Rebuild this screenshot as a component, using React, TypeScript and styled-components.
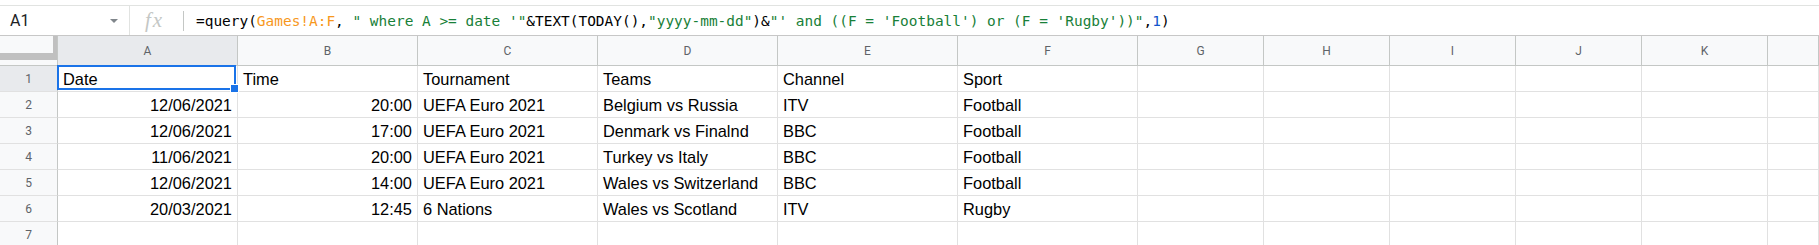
import React from 'react';
import styled, { createGlobalStyle } from 'styled-components';

const GlobalStyle = createGlobalStyle`
  html, body {
    margin: 0;
    padding: 0;
    background: #fff;
    overflow: hidden;
  }
  * {
    box-sizing: border-box;
  }
`;

const Page = styled.div`
  width: 1819px;
  height: 245px;
  padding-top: 5px;
  background: #fff;
  overflow: hidden;
  font-family: Roboto, "Liberation Sans", Arial, sans-serif;
`;

const FormulaBar = styled.div`
  display: flex;
  align-items: center;
  height: 31px;
  border-top: 1px solid #e1e3e1;
  border-bottom: 1px solid #c7c7c7;
`;

const NameBox = styled.div`
  display: flex;
  align-items: center;
  justify-content: space-between;
  width: 130px;
  height: 100%;
  padding: 0 11px 0 10px;
  border-right: 1px solid #e1e3e1;
  font-size: 16px;
  color: #202124;
`;

const Caret = styled.span`
  width: 0;
  height: 0;
  border-left: 4px solid transparent;
  border-right: 4px solid transparent;
  border-top: 4px solid #80868b;
`;

const FxArea = styled.div`
  display: flex;
  align-items: center;
  width: 53px;
  height: 100%;
  padding-left: 15px;
`;

const FxGlyph = styled.span`
  font-family: "Liberation Serif", "DejaVu Serif", serif;
  font-style: italic;
  font-size: 21px;
  letter-spacing: 2px;
  color: #c4c7c5;
`;

const Divider = styled.span`
  width: 1px;
  height: 20px;
  background: #c4c7c5;
`;

const FormulaText = styled.div`
  margin-left: 12px;
  font-family: "DejaVu Sans Mono", "Liberation Mono", monospace;
  font-size: 14.45px;
  white-space: pre;
  color: #000;
`;

const Token = styled.span<{ $kind?: 'range' | 'string' | 'number' }>`
  color: ${p =>
    p.$kind === 'range' ? '#f7981d' : p.$kind === 'string' ? '#188038' : p.$kind === 'number' ? '#1155cc' : '#000'};
`;

const Grid = styled.div`
  display: grid;
  grid-template-columns: 58px repeat(6, 180px) repeat(5, 126px) 1fr;
  grid-template-rows: 30px;
  grid-auto-rows: 26px;
`;

const Corner = styled.div`
  border-right: 1px solid #c4c7c5;
  border-bottom: 1px solid #c4c7c5;
  background:
    linear-gradient(#c0c0c0, #c0c0c0) right top / 4px 24px no-repeat,
    linear-gradient(#c0c0c0, #c0c0c0) left 17px / 100% 7px no-repeat,
    #f8f9fa;
`;

const ColHeader = styled.div<{ $active?: boolean }>`
  display: flex;
  align-items: center;
  justify-content: center;
  border-right: 1px solid #c4c7c5;
  border-bottom: 1px solid #c4c7c5;
  background: ${p => (p.$active ? '#e8eaed' : '#f8f9fa')};
  font-size: 12px;
  color: #5f6368;
`;

const RowHeader = styled.div<{ $active?: boolean }>`
  display: flex;
  align-items: center;
  justify-content: center;
  border-right: 1px solid #c4c7c5;
  border-bottom: 1px solid #e1e1e1;
  background: ${p => (p.$active ? '#e8eaed' : '#f8f9fa')};
  font-size: 12px;
  color: #5f6368;
`;

const Cell = styled.div<{ $align?: 'left' | 'right' }>`
  position: relative;
  display: flex;
  align-items: flex-end;
  justify-content: ${p => (p.$align === 'right' ? 'flex-end' : 'flex-start')};
  padding: 0 5px 2px 5px;
  border-right: 1px solid #e1e1e1;
  border-bottom: 1px solid #e1e1e1;
  font-family: "Liberation Sans", Arial, sans-serif;
  font-size: 16.4px;
  color: #000;
  white-space: nowrap;
  overflow: visible;
`;

const Selection = styled.div`
  position: absolute;
  top: -1px;
  left: -1px;
  right: 1px;
  bottom: 1px;
  border: 2px solid #1a73e8;
  z-index: 2;
  pointer-events: none;
`;

const FillHandle = styled.div`
  position: absolute;
  right: -5px;
  bottom: -5px;
  width: 9px;
  height: 9px;
  border: 1px solid #fff;
  background: #1a73e8;
`;

const columns = ['A', 'B', 'C', 'D', 'E', 'F', 'G', 'H', 'I', 'J', 'K', ''];

type Row = string[];

const rows: Row[] = [
  ['Date', 'Time', 'Tournament', 'Teams', 'Channel', 'Sport'],
  ['12/06/2021', '20:00', 'UEFA Euro 2021', 'Belgium vs Russia', 'ITV', 'Football'],
  ['12/06/2021', '17:00', 'UEFA Euro 2021', 'Denmark vs Finalnd', 'BBC', 'Football'],
  ['11/06/2021', '20:00', 'UEFA Euro 2021', 'Turkey vs Italy', 'BBC', 'Football'],
  ['12/06/2021', '14:00', 'UEFA Euro 2021', 'Wales vs Switzerland', 'BBC', 'Football'],
  ['20/03/2021', '12:45', '6 Nations', 'Wales vs Scotland', 'ITV', 'Rugby'],
  [],
];

const App: React.FC = () => {
  return (
    <Page>
      <GlobalStyle />
      <FormulaBar>
        <NameBox>
          <span>A1</span>
          <Caret />
        </NameBox>
        <FxArea>
          <FxGlyph>fx</FxGlyph>
        </FxArea>
        <Divider />
        <FormulaText>
          <Token>=query(</Token>
          <Token $kind="range">Games!A:F</Token>
          <Token>, </Token>
          <Token $kind="string">" where A &gt;= date '"</Token>
          <Token>&amp;TEXT(TODAY(),</Token>
          <Token $kind="string">"yyyy-mm-dd"</Token>
          <Token>)&amp;</Token>
          <Token $kind="string">"' and ((F = 'Football') or (F = 'Rugby'))"</Token>
          <Token>,</Token>
          <Token $kind="number">1</Token>
          <Token>)</Token>
        </FormulaText>
      </FormulaBar>

      <Grid>
        <Corner />
        {columns.map((c, i) => (
          <ColHeader key={i} $active={c === 'A'}>
            {c}
          </ColHeader>
        ))}
        {rows.map((row, r) => (
          <React.Fragment key={r}>
            <RowHeader $active={r === 0}>{r + 1}</RowHeader>
            {columns.map((_, c) => {
              const value = row[c] ?? '';
              const right = r > 0 && c < 2;
              return (
                <Cell key={c} $align={right ? 'right' : 'left'}>
                  {value}
                  {r === 0 && c === 0 && (
                    <Selection>
                      <FillHandle />
                    </Selection>
                  )}
                </Cell>
              );
            })}
          </React.Fragment>
        ))}
      </Grid>
    </Page>
  );
};

export default App;
